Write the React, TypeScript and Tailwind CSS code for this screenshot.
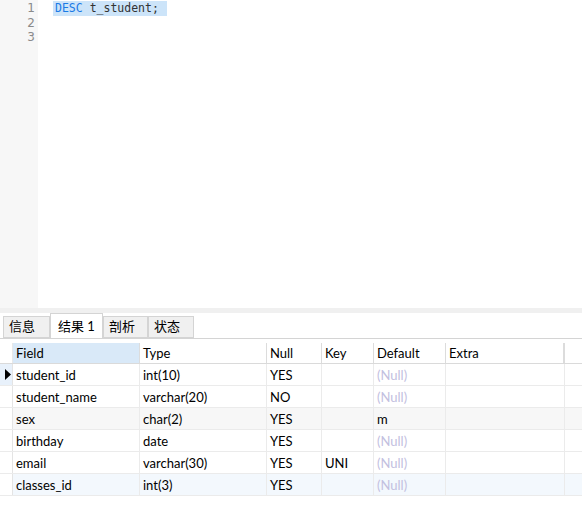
import React from 'react';

type Row = {
  field: string;
  type: string;
  nul: string;
  key: string;
  def: string | null;
  extra: string;
};

const rows: Row[] = [
  { field: 'student_id', type: 'int(10)', nul: 'YES', key: '', def: null, extra: '' },
  { field: 'student_name', type: 'varchar(20)', nul: 'NO', key: '', def: null, extra: '' },
  { field: 'sex', type: 'char(2)', nul: 'YES', key: '', def: 'm', extra: '' },
  { field: 'birthday', type: 'date', nul: 'YES', key: '', def: null, extra: '' },
  { field: 'email', type: 'varchar(30)', nul: 'YES', key: 'UNI', def: null, extra: '' },
  { field: 'classes_id', type: 'int(3)', nul: 'YES', key: '', def: null, extra: '' },
];

const cols = ['Field', 'Type', 'Null', 'Key', 'Default', 'Extra'];
const widths = ['w-[127px]', 'w-[127px]', 'w-[55px]', 'w-[52px]', 'w-[72px]', 'w-[119px]'];

const font = { fontFamily: 'Lato, "Noto Sans CJK SC", sans-serif' };

const Tab: React.FC<{ label: string; active?: boolean; width: string }> = ({ label, active, width }) =>
  active ? (
    <div className={`${width} h-[25px] bg-white border border-b-0 border-[#d4d4d4] pl-[7px] pt-[2px] text-[13px] text-black leading-[20px]`}>
      {label}
    </div>
  ) : (
    <div className={`${width} h-[22px] mt-[3px] bg-[#f0f0f0] border border-[#d4d4d4] pl-[5px] text-[13px] text-black leading-[19px]`}>
      {label}
    </div>
  );

const App: React.FC = () => {
  return (
    <div className="w-[582px] h-[507px] bg-white flex flex-col overflow-hidden" style={font}>
      {/* Editor */}
      <div className="h-[308px] flex">
        <div
          className="w-[38px] bg-[#f7f7f7] pt-[1px] flex flex-col items-end pr-[3px] text-[12px] text-[#8a8a8a] leading-[14.5px]"
          style={{ fontFamily: '"DejaVu Sans", sans-serif' }}
        >
          <span>1</span>
          <span>2</span>
          <span>3</span>
        </div>
        <div className="flex-1 pl-[15px] pt-[1px]">
          <div
            className="w-fit bg-[#cce4f9] pl-[2px] pr-[8px] text-[11.5px] leading-[14.5px]"
            style={{ fontFamily: '"DejaVu Sans Mono", monospace' }}
          >
            <span className="text-[#1a7ae6]">DESC</span>
            <span className="text-[#333]"> t_student;</span>
          </div>
        </div>
      </div>

      <div className="h-[5px] bg-[#f0f0f0]" />

      {/* Tabs */}
      <div className="flex items-end pl-[3px] border-b border-[#d4d4d4]">
        <Tab label="信息" width="w-[47px]" />
        <Tab label="结果 1" active width="w-[53px]" />
        <Tab label="剖析" width="w-[45px]" />
        <Tab label="状态" width="w-[46px]" />
      </div>

      {/* Grid */}
      <div className="pt-[4px] text-[13px] text-black">
        <div className="flex h-[21px] border-b border-[#dadada]">
          <div className="w-[13px] border-r border-[#e8e8e8]" />
          {cols.map((c, i) => (
            <div
              key={c}
              className={`${widths[i]} ${i === 0 ? 'bg-[#d9e9f8]' : ''} ${i === cols.length - 1 ? 'border-r-2' : 'border-r'} border-[#dcdcdc] pl-[3px] leading-[20px]`}
            >
              {c}
            </div>
          ))}
        </div>
        {rows.map((r, ri) => {
          const bg = ri === 2 ? 'bg-[#f7f7f7]' : ri === 5 ? 'bg-[#f3f8fd]' : 'bg-white';
          const vals = [r.field, r.type, r.nul, r.key, r.def, r.extra];
          return (
            <div key={r.field} className={`flex h-[22px] border-b border-[#ebebeb] ${bg}`}>
              <div className={`w-[13px] border-r border-[#e4e4e4] flex items-center ${ri === 0 ? 'bg-[#e8f1fb]' : 'bg-white'}`}>
                {ri === 0 && (
                  <svg width="6" height="11" viewBox="0 0 6 11" className="ml-[5px]">
                    <path d="M0 0 L6 5.5 L0 11 Z" fill="#000" />
                  </svg>
                )}
              </div>
              {vals.map((v, ci) => (
                <div
                  key={ci}
                  className={`${widths[ci]} border-r border-[#ebebeb] pl-[3px] pt-[1px] leading-[21px] whitespace-nowrap overflow-hidden`}
                >
                  {v === null ? <span className="text-[#c2c0e0]">(Null)</span> : v}
                </div>
              ))}
            </div>
          );
        })}
      </div>
    </div>
  );
};

export default App;
